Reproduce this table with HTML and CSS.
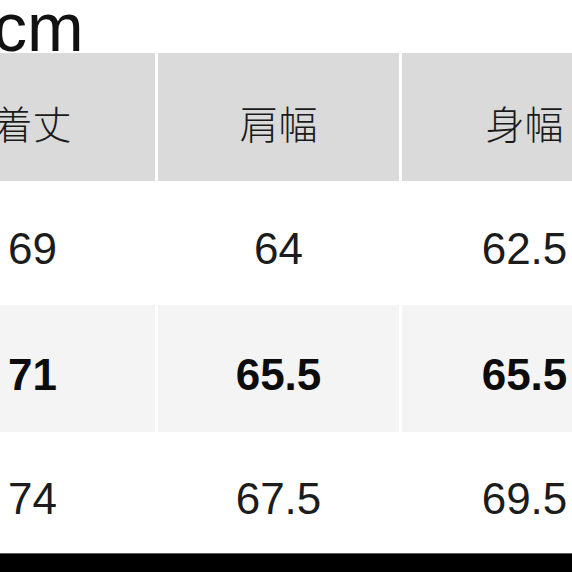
FILE: index.html
```html
<!DOCTYPE html>
<html lang="ja">
<head>
<meta charset="utf-8">
<title>サイズ表</title>
<link rel="stylesheet" href="styles.css">
</head>
<body>
<div class="page">
  <div class="unit">cm</div>
  <div class="table">
    <div class="row head">
      <div class="cell">着丈</div>
      <div class="cell">肩幅</div>
      <div class="cell">身幅</div>
    </div>
    <div class="row r1">
      <div class="cell">69</div>
      <div class="cell">64</div>
      <div class="cell">62.5</div>
    </div>
    <div class="row r2 alt bold">
      <div class="cell">71</div>
      <div class="cell">65.5</div>
      <div class="cell">65.5</div>
    </div>
    <div class="row r3">
      <div class="cell">74</div>
      <div class="cell">67.5</div>
      <div class="cell">69.5</div>
    </div>
  </div>
  <div class="bottom-bar"></div>
</div>
</body>
</html>
```

FILE: styles.css
```css
html, body {
  margin: 0;
  padding: 0;
  background: #ffffff;
}

.page {
  width: 572px;
  height: 572px;
  overflow: hidden;
  display: flex;
  flex-direction: column;
  font-family: "Liberation Sans", Arial, "Noto Sans CJK JP", sans-serif;
  color: #1c1c1c;
}

.unit {
  height: 53px;
  line-height: 54px;
  font-size: 68px;
  margin-left: -7px;
  color: #111111;
  white-space: nowrap;
}

.table {
  display: flex;
  flex-direction: column;
  margin-left: -90px;
  width: 737px;
}

.row {
  display: grid;
  grid-template-columns: 245px 241px 245px;
  column-gap: 3px;
}

.cell {
  display: flex;
  align-items: center;
  justify-content: center;
  font-size: 44px;
  padding-top: 12px;
  box-sizing: border-box;
  white-space: nowrap;
}

.head {
  height: 128px;
}

.head .cell {
  background: #dadada;
  font-family: "Noto Sans CJK JP", sans-serif;
  font-weight: 300;
  font-size: 39px;
  padding-top: 10px;
  color: #1a1a1a;
}

.r1 {
  height: 124px;
}

.r2 {
  height: 127px;
}

.r3 {
  height: 121px;
}

.alt .cell {
  background: #f4f4f4;
}

.bold .cell {
  font-weight: 700;
  color: #0c0c0c;
}

.bottom-bar {
  flex: 1;
  background: #000000;
  border-top: 1px solid #5a5a5a;
}
```
